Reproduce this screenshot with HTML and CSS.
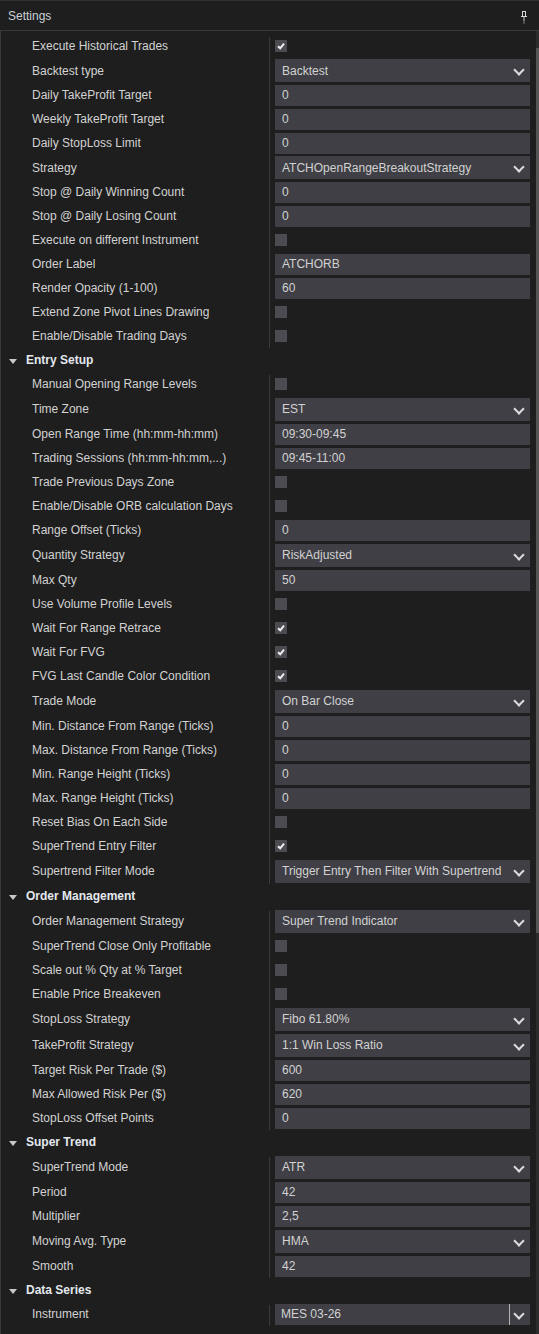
FILE: index.html
```html
<!DOCTYPE html>
<html lang="en">

<head>
    <meta charset="UTF-8">
    <meta name="viewport" content="width=device-width, initial-scale=1.0">
    <title>Settings</title>
    <link rel="stylesheet" href="styles.css">
</head>

<body>
    <div class="panel">
        <div class="titlebar">
            <span class="title">Settings</span>
            <svg class="pin" width="6" height="14" viewBox="0 0 6 14">
                <rect x="1.5" y="0.5" width="3" height="5" fill="none" stroke="#d8d8d8" />
                <rect x="0" y="5" width="6" height="1" fill="#d8d8d8" />
                <rect x="2.5" y="6" width="1" height="4" fill="#c8c8c8" />
                <rect x="2.5" y="10" width="1" height="3" fill="#777" />
            </svg>
        </div>

        <div class="panel-body">
            <div class="props">
                <section class="group">
                    <div class="row"><span class="label">Execute Historical Trades</span><span class="check on"></span></div>
                    <div class="row dd short"><span class="label">Backtest type</span><span class="select">Backtest</span></div>
                    <div class="row"><span class="label">Daily TakeProfit Target</span><span class="field">0</span></div>
                    <div class="row"><span class="label">Weekly TakeProfit Target</span><span class="field">0</span></div>
                    <div class="row"><span class="label">Daily StopLoss Limit</span><span class="field">0</span></div>
                    <div class="row dd short"><span class="label">Strategy</span><span class="select">ATCHOpenRangeBreakoutStrategy</span></div>
                    <div class="row"><span class="label">Stop @ Daily Winning Count</span><span class="field">0</span></div>
                    <div class="row"><span class="label">Stop @ Daily Losing Count</span><span class="field">0</span></div>
                    <div class="row"><span class="label">Execute on different Instrument</span><span class="check"></span></div>
                    <div class="row"><span class="label">Order Label</span><span class="field">ATCHORB</span></div>
                    <div class="row"><span class="label">Render Opacity (1-100)</span><span class="field">60</span></div>
                    <div class="row"><span class="label">Extend Zone Pivot Lines Drawing</span><span class="check"></span></div>
                    <div class="row"><span class="label">Enable/Disable Trading Days</span><span class="check"></span></div>
                </section>

                <div class="group-head">Entry Setup</div>
                <section class="group">
                    <div class="row"><span class="label">Manual Opening Range Levels</span><span class="check"></span></div>
                    <div class="row dd"><span class="label">Time Zone</span><span class="select">EST</span></div>
                    <div class="row"><span class="label">Open Range Time (hh:mm-hh:mm)</span><span class="field">09:30-09:45</span></div>
                    <div class="row"><span class="label">Trading Sessions (hh:mm-hh:mm,...)</span><span class="field">09:45-11:00</span></div>
                    <div class="row"><span class="label">Trade Previous Days Zone</span><span class="check"></span></div>
                    <div class="row"><span class="label">Enable/Disable ORB calculation Days</span><span class="check"></span></div>
                    <div class="row"><span class="label">Range Offset (Ticks)</span><span class="field">0</span></div>
                    <div class="row dd"><span class="label">Quantity Strategy</span><span class="select">RiskAdjusted</span></div>
                    <div class="row"><span class="label">Max Qty</span><span class="field">50</span></div>
                    <div class="row"><span class="label">Use Volume Profile Levels</span><span class="check"></span></div>
                    <div class="row"><span class="label">Wait For Range Retrace</span><span class="check on"></span></div>
                    <div class="row"><span class="label">Wait For FVG</span><span class="check on"></span></div>
                    <div class="row"><span class="label">FVG Last Candle Color Condition</span><span class="check on"></span></div>
                    <div class="row dd"><span class="label">Trade Mode</span><span class="select">On Bar Close</span></div>
                    <div class="row"><span class="label">Min. Distance From Range (Ticks)</span><span class="field">0</span></div>
                    <div class="row"><span class="label">Max. Distance From Range (Ticks)</span><span class="field">0</span></div>
                    <div class="row"><span class="label">Min. Range Height (Ticks)</span><span class="field">0</span></div>
                    <div class="row"><span class="label">Max. Range Height (Ticks)</span><span class="field">0</span></div>
                    <div class="row"><span class="label">Reset Bias On Each Side</span><span class="check"></span></div>
                    <div class="row"><span class="label">SuperTrend Entry Filter</span><span class="check on"></span></div>
                    <div class="row dd"><span class="label">Supertrend Filter Mode</span><span class="select">Trigger Entry Then Filter With Supertrend</span></div>
                </section>

                <div class="group-head">Order Management</div>
                <section class="group">
                    <div class="row dd"><span class="label">Order Management Strategy</span><span class="select">Super Trend Indicator</span></div>
                    <div class="row"><span class="label">SuperTrend Close Only Profitable</span><span class="check"></span></div>
                    <div class="row"><span class="label">Scale out % Qty at % Target</span><span class="check"></span></div>
                    <div class="row"><span class="label">Enable Price Breakeven</span><span class="check"></span></div>
                    <div class="row dd"><span class="label">StopLoss Strategy</span><span class="select">Fibo 61.80%</span></div>
                    <div class="row dd"><span class="label">TakeProfit Strategy</span><span class="select">1:1 Win Loss Ratio</span></div>
                    <div class="row"><span class="label">Target Risk Per Trade ($)</span><span class="field">600</span></div>
                    <div class="row"><span class="label">Max Allowed Risk Per ($)</span><span class="field">620</span></div>
                    <div class="row"><span class="label">StopLoss Offset Points</span><span class="field">0</span></div>
                </section>

                <div class="group-head">Super Trend</div>
                <section class="group">
                    <div class="row dd"><span class="label">SuperTrend Mode</span><span class="select">ATR</span></div>
                    <div class="row"><span class="label">Period</span><span class="field">42</span></div>
                    <div class="row"><span class="label">Multiplier</span><span class="field">2,5</span></div>
                    <div class="row dd"><span class="label">Moving Avg. Type</span><span class="select">HMA</span></div>
                    <div class="row"><span class="label">Smooth</span><span class="field">42</span></div>
                </section>

                <div class="group-head">Data Series</div>
                <section class="group">
                    <div class="row"><span class="label">Instrument</span><span class="select split">MES 03-26</span></div>
                </section>
            </div>

            <div class="scrollbar">
                <div class="scroll-thumb"></div>
            </div>
        </div>
    </div>
</body>

</html>
```

FILE: styles.css
```css
body {
    --bg: #1e1e1e;
    --line: #3a3a3a;
    --box: #3f3f45;
    --text: #d2d2d2;
}

body,
body * {
    padding: 0;
    margin: 0;
    box-sizing: border-box;
    font-family: 'Liberation Sans', Arial, sans-serif;
}

body {
    background-color: var(--bg);
    color: var(--text);
    font-size: 12px;
}

.panel {
    width: 539px;
    height: 1334px;
    border-top: 1px solid #303030;
    overflow: hidden;
}

/* title bar */
.titlebar {
    height: 30px;
    display: flex;
    align-items: center;
    justify-content: space-between;
    padding: 1px 12px 0 8px;
    border-bottom: 1px solid var(--line);
}

.titlebar .title {
    color: #c9d0d6;
}

.titlebar .pin {
    display: block;
    margin-top: 3px;
}

.panel-body {
    display: flex;
    border-left: 1px solid var(--line);
    height: 1303px;
}

.props {
    flex: 1;
    padding-top: 3px;
}

/* scroll bar on the right edge */
.scrollbar {
    width: 3px;
    background-color: #2c2c2c;
}

.scroll-thumb {
    margin-top: 17px;
    height: 885px;
    background-color: #555;
}

/* property groups */
.group {
    background: linear-gradient(var(--line), var(--line)) 268px 3px / 1px calc(100% - 3px) no-repeat;
}

.group-head {
    height: 24px;
    display: flex;
    align-items: center;
    padding-left: 25px;
    position: relative;
    font-weight: bold;
    color: #e4e8ee;
}

.group-head::before {
    content: "";
    position: absolute;
    left: 8px;
    top: 11px;
    border-left: 4px solid transparent;
    border-right: 4px solid transparent;
    border-top: 5px solid #c8c8c8;
}

.row {
    height: 24px;
    display: grid;
    grid-template-columns: 274px 255px;
    align-items: center;
}

.row.dd {
    height: 26px;
}

.row.dd.short {
    height: 25px;
}

.row .label {
    padding-left: 31px;
    white-space: nowrap;
}

.field,
.select {
    display: flex;
    align-items: center;
    background-color: var(--box);
    padding-left: 7px;
    white-space: nowrap;
}

.field {
    height: 21px;
}

.select {
    height: 23px;
    position: relative;
}

.select::after {
    content: "";
    position: absolute;
    right: 7px;
    top: 7px;
    width: 6px;
    height: 6px;
    border-right: 2px solid #dcdcdc;
    border-bottom: 2px solid #dcdcdc;
    transform: rotate(45deg);
}

.select.split {
    height: 21px;
    padding-left: 6px;
}

.select.split::before {
    content: "";
    position: absolute;
    right: 20px;
    top: 0;
    bottom: 0;
    width: 1px;
    background-color: #b4b4b4;
}

.select.split::after {
    right: 7px;
    top: 6px;
}

.check {
    width: 12px;
    height: 12px;
    background-color: #4b4b51;
}

.check.on {
    background: #4b4b51 url("data:image/svg+xml,%3Csvg xmlns='http://www.w3.org/2000/svg' width='12' height='12'%3E%3Cpath d='M3 6.2 L5.2 8.3 L9 3.6' fill='none' stroke='%23f0f0f0' stroke-width='2'/%3E%3C/svg%3E") no-repeat;
}
```
